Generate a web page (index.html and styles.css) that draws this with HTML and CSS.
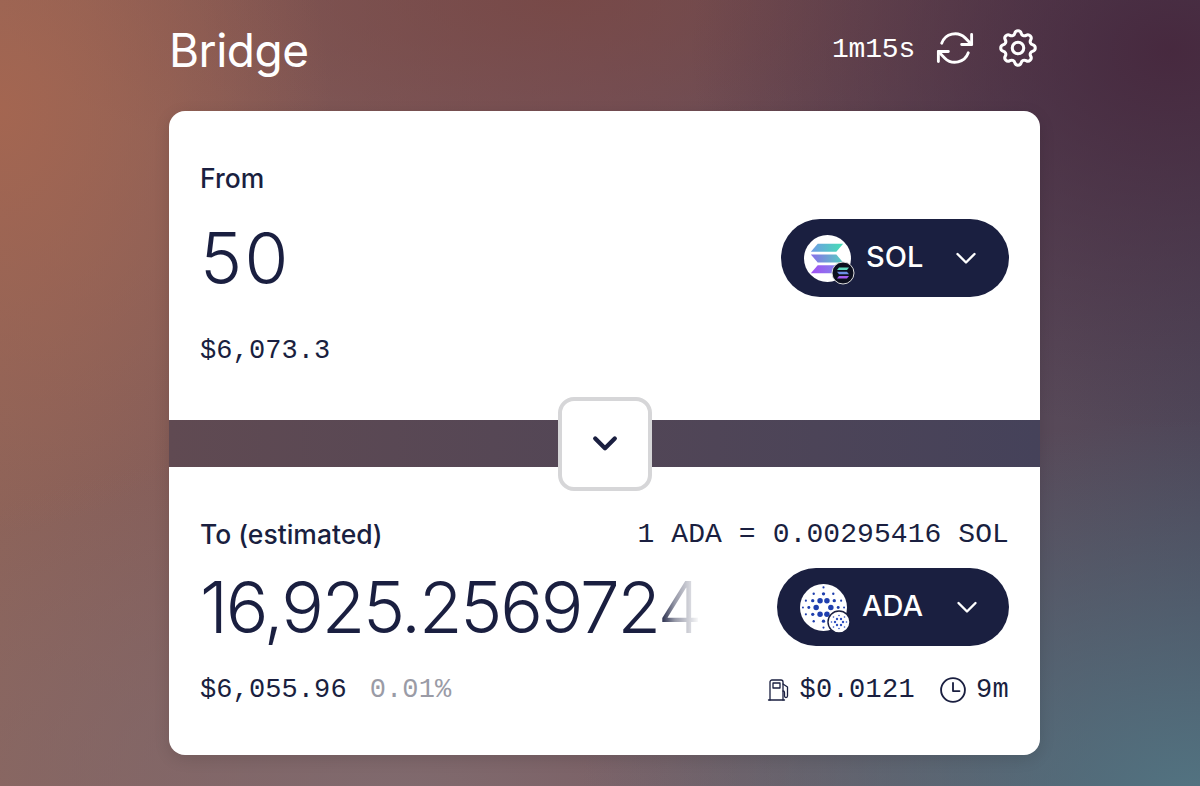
FILE: index.html
```html
<!DOCTYPE html>
<html lang="en">
<head>
  <meta charset="UTF-8">
  <meta name="viewport" content="width=device-width, initial-scale=1.0">
  <title>Bridge</title>
  <link rel="stylesheet" href="styles.css">
</head>
<body>
  <main class="bridge">
    <header class="top">
      <h1 class="title">Bridge</h1>
      <div class="top-tools">
        <span class="timer mono">1m15s</span>
        <svg class="tool-icon refresh" viewBox="0 0 24 24">
          <polyline points="22.5 3.5 22.5 9.800 16.200 9.800"/>
          <polyline points="1.500 20.500 1.500 14.200 7.800 14.200"/>
          <path d="M3.600 9a9 9 0 0 1 14.800-3.400L22.500 9.800M1.500 14.200l4.100 4.200A9 9 0 0 0 20.400 15"/>
        </svg>
        <svg class="tool-icon gear" viewBox="0 0 24 24">
          <path d="M10.325 4.317c.426-1.756 2.924-1.756 3.35 0a1.724 1.724 0 002.573 1.066c1.543-.94 3.31.826 2.37 2.37a1.724 1.724 0 001.065 2.572c1.756.426 1.756 2.924 0 3.35a1.724 1.724 0 00-1.066 2.573c.94 1.543-.826 3.31-2.37 2.37a1.724 1.724 0 00-2.572 1.065c-.426 1.756-2.924 1.756-3.35 0a1.724 1.724 0 00-2.573-1.066c-1.543.94-3.31-.826-2.37-2.37a1.724 1.724 0 00-1.065-2.572c-1.756-.426-1.756-2.924 0-3.35a1.724 1.724 0 001.066-2.573c-.94-1.543.826-3.31 2.37-2.37.996.608 2.296.07 2.572-1.065z"/>
          <path d="M15 12a3 3 0 11-6 0 3 3 0 016 0z"/>
        </svg>
      </div>
    </header>

    <section class="card">
      <div class="panel panel-from">
        <div class="label">From</div>
        <div class="amount-row">
          <div class="amount amount-short">50</div>
          <button class="token token-sol">
            <span class="token-logo">
              <svg class="logo-main" viewBox="0 0 48 48">
                <defs>
                  <linearGradient id="solTop" x1="0" y1="0" x2="1" y2="0">
                    <stop offset="0" stop-color="#6f9be6"/>
                    <stop offset="1" stop-color="#45dfb4"/>
                  </linearGradient>
                  <linearGradient id="solMid" x1="0" y1="0" x2="1" y2="0">
                    <stop offset="0" stop-color="#8a6eea"/>
                    <stop offset="1" stop-color="#55cfc0"/>
                  </linearGradient>
                  <linearGradient id="solBot" x1="0" y1="0" x2="1" y2="0">
                    <stop offset="0" stop-color="#a24ff2"/>
                    <stop offset="1" stop-color="#7d8cea"/>
                  </linearGradient>
                </defs>
                <circle cx="24" cy="24" r="24" fill="#fff"/>
                <polygon points="14,9 40,9 33,17 7,17" fill="url(#solTop)"/>
                <polygon points="7,20 33,20 40,28 14,28" fill="url(#solMid)"/>
                <polygon points="14,31 40,31 33,39 7,39" fill="url(#solBot)"/>
              </svg>
              <svg class="logo-badge" viewBox="0 0 24 24">
                <circle cx="12" cy="12" r="11" fill="#0c0f1e" stroke="#ddd" stroke-width="1"/>
                <polygon points="8,6.500 18,6.500 16,9 6,9" fill="#5fdcc0"/>
                <polygon points="6,10.800 16,10.800 18,13.200 8,13.200" fill="#6c8ee6"/>
                <polygon points="8,15 18,15 16,17.500 6,17.500" fill="#a35cf0"/>
              </svg>
            </span>
            <span class="token-name">SOL</span>
            <svg class="chev" viewBox="0 0 24 24"><polyline points="3.500 8 12 16.500 20.500 8"/></svg>
          </button>
        </div>
        <div class="sub mono">$6,073.3</div>
      </div>

      <div class="band">
        <button class="swap">
          <svg class="swap-chev" viewBox="0 0 24 24"><polyline points="3 6 12 15 21 6"/></svg>
        </button>
      </div>

      <div class="panel panel-to">
        <div class="to-head">
          <div class="label">To (estimated)</div>
          <div class="rate mono">1 ADA = 0.00295416 SOL</div>
        </div>
        <div class="amount-row">
          <div class="amount amount-fade">16,925.2569724</div>
          <button class="token token-ada">
            <span class="token-logo">
              <svg class="logo-main" viewBox="0 0 48 48">
                <circle cx="24" cy="24" r="24" fill="#fff"/>
                <g fill="#1f3fae">
                  <circle cx="20.500" cy="17" r="2.800"/><circle cx="27.500" cy="17" r="2.800"/>
                  <circle cx="16.500" cy="24" r="2.800"/><circle cx="31.500" cy="24" r="2.800"/>
                  <circle cx="20.500" cy="31" r="2.800"/><circle cx="27.500" cy="31" r="2.800"/>
                  <circle cx="24" cy="10" r="1.700"/><circle cx="24" cy="38" r="1.700"/>
                  <circle cx="13" cy="17" r="1.700"/><circle cx="35" cy="17" r="1.700"/>
                  <circle cx="13" cy="31" r="1.700"/><circle cx="35" cy="31" r="1.700"/>
                  <circle cx="14" cy="10" r="1.200"/><circle cx="34" cy="10" r="1.200"/>
                  <circle cx="14" cy="38" r="1.200"/><circle cx="34" cy="38" r="1.200"/>
                  <circle cx="6" cy="17" r="1.100"/><circle cx="42" cy="17" r="1.100"/>
                  <circle cx="6" cy="31" r="1.100"/><circle cx="42" cy="31" r="1.100"/>
                  <circle cx="24" cy="3.500" r="1.100"/><circle cx="24" cy="44.500" r="1.100"/>
                  <circle cx="3" cy="24" r="1"/><circle cx="45" cy="24" r="1"/>
                  <circle cx="9" cy="24" r="1.500"/><circle cx="39" cy="24" r="1.500"/>
                </g>
              </svg>
              <svg class="logo-badge" viewBox="0 0 24 24">
                <circle cx="12" cy="12" r="11" fill="#fff" stroke="#1a1f40" stroke-width="1.400"/>
                <g fill="#2f4fc0">
                  <circle cx="10" cy="9" r="1.200"/><circle cx="14" cy="9" r="1.200"/>
                  <circle cx="8" cy="12" r="1.200"/><circle cx="16" cy="12" r="1.200"/>
                  <circle cx="10" cy="15" r="1.200"/><circle cx="14" cy="15" r="1.200"/>
                  <circle cx="12" cy="5.500" r=".8"/><circle cx="12" cy="18.500" r=".8"/>
                  <circle cx="6.500" cy="7" r=".8"/><circle cx="17.500" cy="7" r=".8"/>
                  <circle cx="6.500" cy="17" r=".8"/><circle cx="17.500" cy="17" r=".8"/>
                  <circle cx="4.500" cy="12" r=".8"/><circle cx="19.500" cy="12" r=".8"/>
                </g>
              </svg>
            </span>
            <span class="token-name">ADA</span>
            <svg class="chev" viewBox="0 0 24 24"><polyline points="3.500 8 12 16.500 20.500 8"/></svg>
          </button>
        </div>
        <div class="to-foot">
          <div class="sub mono">$6,055.96<span class="muted">0.01%</span></div>
          <div class="meta mono">
            <svg class="meta-icon pump" viewBox="0 0 24 24">
              <path d="M3 22V4a2 2 0 0 1 2-2h9a2 2 0 0 1 2 2v18"/>
              <path d="M1.500 22h16"/>
              <rect x="6" y="5" width="7" height="5"/>
              <path d="M16 6l4.500 3v9a1.500 1.500 0 0 1-3 0v-3.500a1.500 1.500 0 0 0-1.500-1.500"/>
            </svg>
            <span>$0.0121</span>
            <svg class="meta-icon clock" viewBox="0 0 24 24">
              <circle cx="12" cy="12" r="11"/>
              <polyline points="12 5.500 12 13 18 13"/>
            </svg>
            <span>9m</span>
          </div>
        </div>
      </div>
    </section>
  </main>
</body>
</html>
```

FILE: styles.css
```css
* {
  box-sizing: border-box;
}

html, body {
  height: 100%;
}

body {
  margin: 0;
  overflow: hidden;
  color: #1a1f40;
  font-family: 'Inter', sans-serif;
  background-color: #6a4a52;
  background-image:
    radial-gradient(ellipse 330px 420px at 0 110px, rgba(166, 102, 80, 0.9), rgba(166, 102, 80, 0) 100%),
    radial-gradient(ellipse 620px 380px at 1200px 800px, rgba(82, 116, 130, 1), rgba(82, 116, 130, 0) 100%),
    radial-gradient(ellipse 480px 380px at 1170px 50px, rgba(70, 38, 60, 0.9), rgba(70, 38, 60, 0) 100%),
    radial-gradient(ellipse 560px 200px at 560px 0, rgba(120, 70, 66, 0.75), rgba(120, 70, 66, 0) 100%),
    radial-gradient(ellipse 700px 360px at 400px 800px, rgba(128, 108, 112, 0.9), rgba(128, 108, 112, 0) 100%),
    linear-gradient(90deg, #8d6359 0%, #74525a 50%, #4e4658 100%);
}

.mono {
  font-family: 'Liberation Mono', 'DejaVu Sans Mono', monospace;
}

.bridge {
  width: 871px;
  margin-left: 169px;
}

.top {
  display: flex;
  justify-content: space-between;
  align-items: center;
  height: 111px;
  padding-bottom: 11px;
  color: #fff;
}

.title {
  margin: 0;
  font-size: 46px;
  font-weight: 400;
  letter-spacing: -0.5px;
}

.top-tools {
  display: flex;
  align-items: center;
  padding-right: 2px;
  padding-bottom: 4px;
}

.timer {
  font-size: 28px;
  letter-spacing: -0.2px;
  margin-right: 21px;
  padding-top: 3px;
}

.tool-icon {
  width: 38px;
  height: 38px;
  fill: none;
  stroke: #fff;
  stroke-width: 1.8;
  stroke-linecap: round;
  stroke-linejoin: round;
}

.gear {
  margin-left: 21px;
  width: 46px;
  height: 46px;
  stroke-width: 1.6;
  margin-right: -3px;
}

.card {
  background: #fff;
  border-radius: 16px;
  box-shadow: 0 4px 16px rgba(0, 0, 0, 0.12);
  overflow: hidden;
}

.panel {
  padding: 0 31px;
}

.panel-from {
  height: 309px;
  padding-top: 50px;
}

.panel-to {
  height: 288px;
  padding-top: 50px;
}

.label {
  font-size: 26.5px;
  font-weight: 500;
  line-height: 34px;
}

.amount-row {
  display: flex;
  justify-content: space-between;
  align-items: center;
}

.panel-from .amount-row {
  margin-top: 24px;
  height: 78px;
}

.panel-to .amount-row {
  margin-top: 17px;
  height: 78px;
}

.amount {
  font-size: 71px;
  font-weight: 350;
  line-height: 78px;
  white-space: nowrap;
}

.amount-short {
  letter-spacing: 2.5px;
}

.amount-fade {
  letter-spacing: -2.2px;
  -webkit-mask-image: linear-gradient(90deg, #000 92%, rgba(0, 0, 0, 0.45) 95%, transparent 100%);
  mask-image: linear-gradient(90deg, #000 92%, rgba(0, 0, 0, 0.45) 95%, transparent 100%);
}

.token {
  display: flex;
  align-items: center;
  height: 78px;
  border: 0;
  border-radius: 39px;
  background: #1a1f40;
  color: #fff;
  font-family: inherit;
}

.token-sol {
  width: 228px;
  padding-left: 23px;
}

.token-ada {
  width: 232px;
  padding-left: 23px;
}

.token-logo {
  position: relative;
  display: block;
  width: 47px;
  height: 47px;
  flex: none;
}

.logo-main {
  display: block;
  width: 47px;
  height: 47px;
}

.logo-badge {
  position: absolute;
  right: -4px;
  bottom: -3px;
  width: 24px;
  height: 24px;
}

.token-name {
  margin-left: 15px;
  padding-bottom: 4px;
  font-size: 29px;
  font-weight: 450;
  text-align: left;
}

.token-sol .token-name {
  width: 73px;
}

.token-ada .token-name {
  width: 78px;
}

.chev {
  width: 24px;
  height: 24px;
  margin-left: 15px;
  fill: none;
  stroke: #fff;
  stroke-width: 2.4;
  stroke-linecap: round;
  stroke-linejoin: round;
}

.sub {
  font-size: 27px;
  letter-spacing: 0.1px;
  line-height: 32px;
}

.panel-from .sub {
  margin-top: 38px;
}

.band {
  display: flex;
  justify-content: center;
  align-items: center;
  height: 47px;
  background: linear-gradient(90deg, #604a52, #45425a);
}

.swap {
  display: flex;
  justify-content: center;
  align-items: center;
  width: 94px;
  height: 94px;
  margin: -23px 0;
  padding: 3px 0 0;
  background: #fff;
  border: 4px solid #d6d6d8;
  border-radius: 16px;
  position: relative;
}

.swap-chev {
  width: 26px;
  height: 26px;
  fill: none;
  stroke: #1a1f40;
  stroke-width: 4;
  stroke-linecap: round;
  stroke-linejoin: round;
}

.to-head {
  display: flex;
  justify-content: space-between;
  align-items: center;
}

.rate {
  font-size: 28px;
  letter-spacing: 0.08px;
}

.to-foot {
  display: flex;
  justify-content: space-between;
  align-items: center;
  margin-top: 28px;
}

.muted {
  color: #9a9ba6;
  margin-left: 23px;
}

.meta {
  display: flex;
  align-items: center;
  font-size: 27px;
  letter-spacing: 0.3px;
}

.meta-icon {
  fill: none;
  stroke: #1a1f40;
  stroke-linecap: round;
  stroke-linejoin: round;
}

.pump {
  width: 24px;
  height: 24px;
  margin-right: 8px;
  stroke-width: 1.3;
}

.clock {
  margin-left: 25px;
  width: 26px;
  height: 26px;
  margin-right: 10px;
  stroke-width: 1.700;
}
```
